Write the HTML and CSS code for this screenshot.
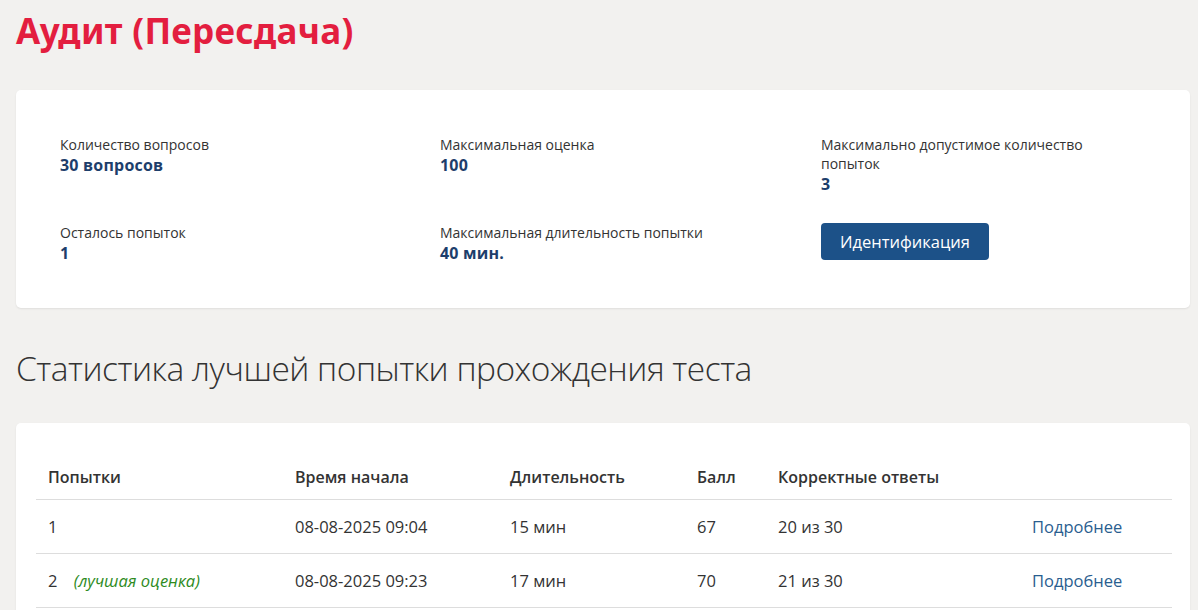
FILE: index.html
```html
<!DOCTYPE html>
<html lang="ru">
<head>
<meta charset="utf-8">
<title>Аудит (Пересдача)</title>
<link rel="stylesheet" href="styles.css">
</head>
<body>
<main class="page">
  <h1 class="title">Аудит (Пересдача)</h1>

  <section class="card info">
    <div class="info-grid">
      <div class="item">
        <div class="label">Количество вопросов</div>
        <div class="value">30 вопросов</div>
      </div>
      <div class="item">
        <div class="label">Максимальная оценка</div>
        <div class="value">100</div>
      </div>
      <div class="item">
        <div class="label">Максимально допустимое количество попыток</div>
        <div class="value">3</div>
      </div>
      <div class="item">
        <div class="label">Осталось попыток</div>
        <div class="value">1</div>
      </div>
      <div class="item">
        <div class="label">Максимальная длительность попытки</div>
        <div class="value">40 мин.</div>
      </div>
      <div class="item">
        <button class="btn" type="button">Идентификация</button>
      </div>
    </div>
  </section>

  <h2 class="subtitle">Статистика лучшей попытки прохождения теста</h2>

  <section class="card stats">
    <table class="table">
      <colgroup>
        <col class="c1"><col class="c2"><col class="c3"><col class="c4"><col class="c5"><col class="c6">
      </colgroup>
      <thead>
        <tr>
          <th>Попытки</th>
          <th>Время начала</th>
          <th>Длительность</th>
          <th>Балл</th>
          <th>Корректные ответы</th>
          <th></th>
        </tr>
      </thead>
      <tbody>
        <tr>
          <td>1</td>
          <td>08-08-2025 09:04</td>
          <td>15 мин</td>
          <td>67</td>
          <td>20 из 30</td>
          <td><a class="more" href="#">Подробнее</a></td>
        </tr>
        <tr>
          <td>2 <span class="best">(лучшая оценка)</span></td>
          <td>08-08-2025 09:23</td>
          <td>17 мин</td>
          <td>70</td>
          <td>21 из 30</td>
          <td><a class="more" href="#">Подробнее</a></td>
        </tr>
      </tbody>
    </table>
  </section>
</main>
</body>
</html>
```

FILE: styles.css
```css
html, body {
  margin: 0;
  padding: 0;
}
body {
  background: #f2f1ef;
  font-family: "Open Sans", "Noto Sans", sans-serif;
  color: #333;
  overflow: hidden;
}
.page {
  padding: 0 8px 0 16px;
}
.title {
  margin: 0;
  padding-top: 8px;
  height: 90px;
  box-sizing: border-box;
  font-family: "Noto Sans", sans-serif;
  font-weight: 700;
  font-size: 35px;
  line-height: 46px;
  color: #e31e3f;
  letter-spacing: 0.3px;
}
.card {
  background: #fff;
  border-radius: 5px;
  box-shadow: 0 1px 2px rgba(0,0,0,0.08);
}
.info {
  height: 218px;
  box-sizing: border-box;
  padding: 45px 0 0 44px;
}
.info-grid {
  display: grid;
  grid-template-columns: 380px 381px 280px;
  row-gap: 28px;
}
.label {
  font-size: 14px;
  line-height: 19px;
  color: #333;
}
.value {
  font-size: 16px;
  font-weight: 700;
  line-height: 22px;
  color: #1d3e6b;
  letter-spacing: 0.2px;
}
.btn {
  display: block;
  width: 168px;
  height: 37px;
  border: 0;
  border-radius: 4px;
  background: #1c5188;
  color: #fff;
  font-family: "Open Sans", "Noto Sans", sans-serif;
  font-size: 16.5px;
  cursor: pointer;
}
.subtitle {
  margin: 0;
  height: 115px;
  box-sizing: border-box;
  padding-top: 38px;
  font-family: "Open Sans", sans-serif;
  font-weight: 300;
  font-size: 33.5px;
  line-height: 44px;
  color: #333;
  letter-spacing: -0.5px;
}
.stats {
  padding: 32px 18px 20px 20px;
}
.table {
  width: 100%;
  border-collapse: collapse;
  table-layout: fixed;
}
.c1 { width: 247px; }
.c2 { width: 215px; }
.c3 { width: 187px; }
.c4 { width: 81px; }
.c5 { width: 254px; }
.c6 { width: auto; }
.table th {
  text-align: left;
  font-size: 16px;
  font-weight: 600;
  height: 44px;
  padding: 0 12px;
  vertical-align: middle;
  border-bottom: 1px solid #ddd;
}
.table td {
  height: 53px;
  padding: 0 12px;
  border-bottom: 1px solid #ddd;
  font-size: 16.5px;
  vertical-align: middle;
  white-space: nowrap;
}
.best {
  margin-left: 12px;
  font-style: italic;
  font-size: 16.5px;
  color: #2e8b1e;
}
.more {
  color: #2a5e8f;
  text-decoration: none;
}
```
